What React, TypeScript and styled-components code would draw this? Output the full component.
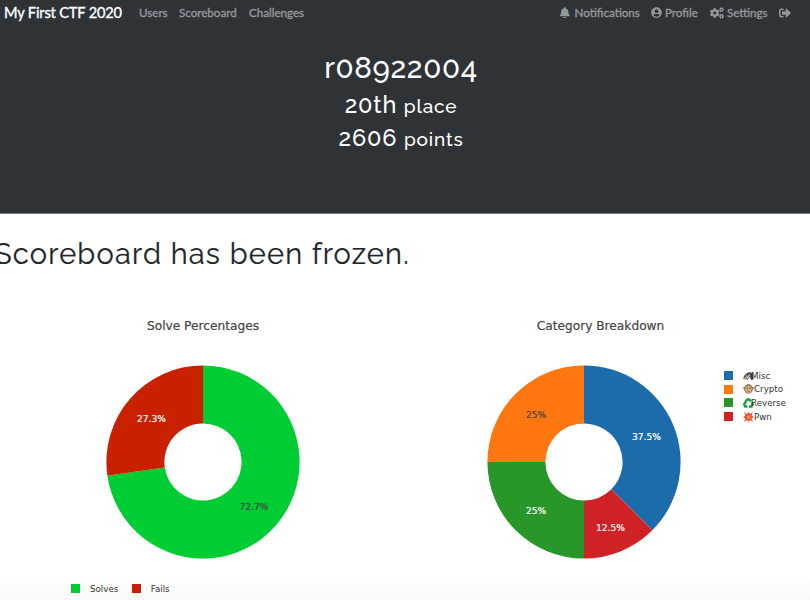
import React from "react";
import styled, { createGlobalStyle } from "styled-components";
import { FaBell, FaUserCircle, FaCogs, FaSignOutAlt } from "react-icons/fa";

const Global = createGlobalStyle`
  *{box-sizing:border-box}
  html,body{margin:0;padding:0;background:#fff;overflow:hidden}
`;
const Page = styled.div`
  width: 810px; height: 600px; overflow: hidden;
  display: flex; flex-direction: column;
  background: linear-gradient(#fff 575px, #f8f8f8 600px);
`;
const Header = styled.header`
  height: 214px; flex: none; background: #2e3338; border-bottom: 1px solid #7b7e81; color: #fff;
`;
const Nav = styled.nav`
  height: 25px; padding: 0 19px 0 4px; display: flex; align-items: center;
  font-family: Lato, sans-serif; font-size: 11.6px; color: #94979a;
`;
const Brand = styled.span`
  color: #fff; font-size: 14.6px; letter-spacing: -0.15px; width: 135px; white-space: nowrap;
  -webkit-text-stroke: 0.35px currentColor;
`;
const NavLink = styled.span<{ $w: number; $gap?: number }>`
  width: ${(p) => p.$w}px; display: flex; align-items: center; gap: ${(p) => p.$gap ?? 4}px;
  white-space: nowrap; -webkit-text-stroke: 0.35px currentColor;
  svg { flex: none; stroke: none; }
`;
const Grow = styled.div`flex: 1;`;
const Team = styled.div`
  padding-top: 22px; padding-right: 8px; display: flex; flex-direction: column; align-items: center;
  font-family: Raleway, Lato, sans-serif; font-weight: 500;
`;
const Line = styled.div<{ $size: number; $h: number; $ls: number }>`
  font-size: ${(p) => p.$size}px; line-height: ${(p) => p.$h}px; height: ${(p) => p.$h}px;
  letter-spacing: ${(p) => p.$ls}px;
  small { font-size: 19px; letter-spacing: 0.8px; }
`;
const Frozen = styled.h1`
  margin: 20px 0 0 -6px; height: 40px; font: 400 29px/40px Raleway, Lato, sans-serif;
  letter-spacing: 1.2px; color: #212529; white-space: nowrap; -webkit-text-stroke: 0.2px currentColor;
`;
const Charts = styled.main`
  display: grid; grid-template-columns: 406px 404px; padding-top: 43px;
  font-family: "DejaVu Sans", Verdana, sans-serif; color: #444;
`;
const Chart = styled.section<{ $left: number }>`
  padding-left: ${(p) => p.$left}px; display: flex; flex-direction: column;
`;
const Title = styled.h2<{ $shift: number }>`
  width: 194px; margin: 1px 0 31px; padding-left: ${(p) => p.$shift}px;
  display: flex; justify-content: center; font-size: 12.2px; font-weight: 400; line-height: 16px; white-space: nowrap;
  -webkit-text-stroke: 0.2px currentColor;
`;
const Row = styled.div`display: flex; align-items: flex-start;`;
const Donut = styled.svg`
  width: 194px; height: 194px; flex: none; display: block;
  font-size: 9.1px;
`;
const Legend = styled.div<{ $row?: boolean }>`
  display: flex; font-size: 8.7px; white-space: nowrap; color: #333;
  ${(p) => (p.$row ? "margin: 23px 0 0 -35px; gap: 13.5px;" : "margin: 4px 0 0 43px; flex-direction: column;")}
`;
const Item = styled.div`
  height: 13.6px; display: flex; align-items: center; gap: 10px;
`;
const Swatch = styled.span<{ $c: string }>`width: 9px; height: 9px; background: ${(p) => p.$c};`;
const Label = styled.span<{ $gap: number }>`
  display: flex; align-items: center;
  svg { flex: none; margin-right: ${(p) => p.$gap}px; }
`;

type Slice = { value: number; color: string; text: string; ink: string; x: number; y: number };

const point = (r: number, t: number) => {
  const a = t * Math.PI * 2;
  return `${97 + r * Math.sin(a)} ${97 - r * Math.cos(a)}`;
};
const slicePath = (s: number, e: number) => {
  const big = e - s > 0.5 ? 1 : 0;
  return `M${point(96.6, s)}A96.6 96.6 0 ${big} 1 ${point(96.6, e)}L${point(38.6, e)}A38.6 38.6 0 ${big} 0 ${point(38.6, s)}Z`;
};
function Pie({ slices }: { slices: Slice[] }) {
  let at = 0;
  return (
    <Donut viewBox="0 0 194 194">
      {slices.map((s) => {
        const start = at;
        at += s.value;
        return <path key={s.color} d={slicePath(start, at)} fill={s.color} />;
      })}
      {slices.map((s) => (
        <text key={s.color} x={s.x} y={s.y} fill={s.ink} stroke={s.ink} strokeWidth={0.2} textAnchor="middle">{s.text}</text>
      ))}
    </Donut>
  );
}
const solves: Slice[] = [
  { value: 8 / 11, color: "#00cc33", text: "72.7%", ink: "#444", x: 148, y: 145 },
  { value: 3 / 11, color: "#c92100", text: "27.3%", ink: "#fff", x: 45.5, y: 57 },
];
const categories: Slice[] = [
  { value: 0.375, color: "#1c6cab", text: "37.5%", ink: "#fff", x: 159.5, y: 75 },
  { value: 0.125, color: "#d02224", text: "12.5%", ink: "#fff", x: 123.5, y: 166 },
  { value: 0.25, color: "#289628", text: "25%", ink: "#fff", x: 49, y: 149 },
  { value: 0.25, color: "#ff7711", text: "25%", ink: "#444", x: 49, y: 53 },
];

const Badger = () => (
  <svg width="11" height="10" viewBox="0 0 11 10">
    <path d="M0.3 8Q0.5 4.5 3.5 2.6Q5.5 0.6 8 1.6Q10.8 3 10.6 8.5L8 9L6.8 5.5L4.8 8.6Z" fill="#45464a" />
    <path d="M0.3 8L3.8 3.6L4.4 8.4Z" fill="#b78f68" />
    <path d="M4.2 7.2L6.4 3.6" stroke="#f2f2f2" strokeWidth="1.1" />
  </svg>
);
const Monkey = () => (
  <svg width="11" height="10" viewBox="0 0 11 10">
    <circle cx="1.3" cy="4" r="1.2" fill="#b98c5f" /><circle cx="9.7" cy="4" r="1.2" fill="#b98c5f" />
    <ellipse cx="5.5" cy="5" rx="4.3" ry="4.7" fill="#80603c" />
    <ellipse cx="5.5" cy="5.2" rx="3.3" ry="3.7" fill="#d3b182" />
    <circle cx="4.2" cy="4.2" r="0.6" fill="#4b3626" /><circle cx="6.8" cy="4.2" r="0.6" fill="#4b3626" />
    <path d="M4.2 7.2h2.6" stroke="#7b5a3c" strokeWidth="0.7" />
  </svg>
);
const Recycle = () => (
  <svg width="11" height="10" viewBox="0 0 11 10">
    <path d="M2.4 4L4.3 1.4H6.4L8 3.4M8.8 4.2l1 2-1.3 2.2H6M4.5 8.4H2.2L1.2 6.2l1.5-2" stroke="#19a548" strokeWidth="2.5" fill="none" />
  </svg>
);
const Burst = () => (
  <svg width="11" height="10" viewBox="0 0 11 10">
    <path d="M1 0L4 2L5.5 0L7 2L10 0L8.6 3.5L11 5L8.5 6.2L10 10L7 8L5.5 10L4 8L1 10L2.4 6.5L0 5L2.4 3.5Z" fill="#e85a36" />
    <path d="M5.5 3L7 5L5.5 7L4 5Z" fill="#ff9a62" />
  </svg>
);

export default function App() {
  return (
    <Page>
      <Global />
      <Header>
        <Nav>
          <Brand>My First CTF 2020</Brand>
          <NavLink $w={40}>Users</NavLink>
          <NavLink $w={70}>Scoreboard</NavLink>
          <NavLink $w={60}>Challenges</NavLink>
          <Grow />
          <NavLink $w={92}><FaBell size={11.5} />Notifications</NavLink>
          <NavLink $w={59} $gap={3}><FaUserCircle size={11} />Profile</NavLink>
          <NavLink $w={69} $gap={3}><FaCogs size={14} />Settings</NavLink>
          <NavLink $w={12}><FaSignOutAlt size={12} /></NavLink>
        </Nav>
        <Team>
          <Line $size={29.5} $h={41} $ls={0.6}>r08922004</Line>
          <Line $size={23.5} $h={33} $ls={0.8}>20th <small>place</small></Line>
          <Line $size={23.5} $h={33} $ls={0.8}>2606 <small>points</small></Line>
        </Team>
      </Header>
      <Frozen>Scoreboard has been frozen.</Frozen>
      <Charts>
        <Chart $left={106}>
          <Title $shift={0}>Solve Percentages</Title>
          <Pie slices={solves} />
          <Legend $row>
            <Item><Swatch $c="#00cc33" />Solves</Item>
            <Item><Swatch $c="#c92100" />Fails</Item>
          </Legend>
        </Chart>
        <Chart $left={81}>
          <Title $shift={33}>Category Breakdown</Title>
          <Row>
            <Pie slices={categories} />
            <Legend>
              <Item><Swatch $c="#1c6cab" /><Label $gap={-3}><Badger />Misc</Label></Item>
              <Item><Swatch $c="#ff7711" /><Label $gap={0}><Monkey />Crypto</Label></Item>
              <Item><Swatch $c="#289628" /><Label $gap={-3}><Recycle />Reverse</Label></Item>
              <Item><Swatch $c="#d02224" /><Label $gap={0}><Burst />Pwn</Label></Item>
            </Legend>
          </Row>
        </Chart>
      </Charts>
    </Page>
  );
}
